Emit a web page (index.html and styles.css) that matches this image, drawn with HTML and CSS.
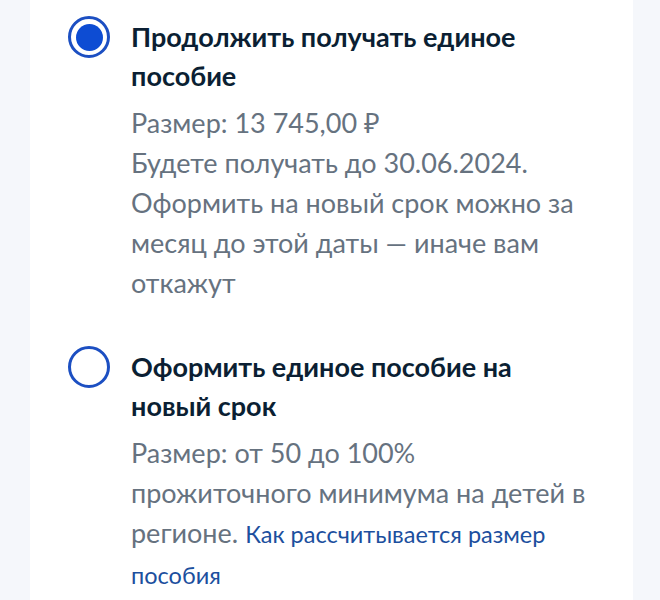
FILE: index.html
```html
<!DOCTYPE html>
<html lang="ru">
<head>
<meta charset="utf-8">
<link rel="stylesheet" href="styles.css">
</head>
<body>
<div class="card">
  <div class="option">
    <span class="radio radio--checked"><span class="dot"></span></span>
    <div class="content">
      <div class="title">Продолжить получать единое пособие</div>
      <div class="desc">Размер: 13&nbsp;745,00&nbsp;₽<br>Будете получать до 30.06.2024. Оформить на новый срок можно за месяц до этой даты — иначе вам откажут</div>
    </div>
  </div>
  <div class="option">
    <span class="radio"></span>
    <div class="content">
      <div class="title">Оформить единое пособие на новый срок</div>
      <div class="desc">Размер: от 50 до 100% прожиточного минимума на детей в регионе. <a class="link" href="#">Как рассчитывается размер пособия</a></div>
    </div>
  </div>
</div>
</body>
</html>
```
FILE: styles.css
```css
html, body {
  margin: 0;
  padding: 0;
  background: #f5f7fb;
  font-family: Lato, "Noto Sans", sans-serif;
}
.card {
  margin-left: 30px;
  width: 603px;
  min-height: 600px;
  background: #ffffff;
  box-sizing: border-box;
  padding: 17px 0 0 38px;
  display: flex;
  flex-direction: column;
  gap: 44px;
}
.option {
  display: flex;
  gap: 21px;
}
.radio {
  flex: none;
  width: 42px;
  height: 42px;
  box-sizing: border-box;
  border: 3.5px solid #1c4fc2;
  border-radius: 50%;
  display: flex;
  align-items: center;
  justify-content: center;
  margin-top: -1px;
}
.dot {
  width: 27px;
  height: 27px;
  border-radius: 50%;
  background: #0d4cd3;
}
.content {
  width: 460px;
}
.title {
  font-size: 27px;
  font-weight: 700;
  line-height: 39px;
  color: #0b1f33;
}
.desc {
  margin-top: 8px;
  font-size: 27px;
  line-height: 40px;
  color: #66727f;
}
.link {
  color: #1c4f9e;
  text-decoration: none;
  font-size: 23.5px;
}
```
